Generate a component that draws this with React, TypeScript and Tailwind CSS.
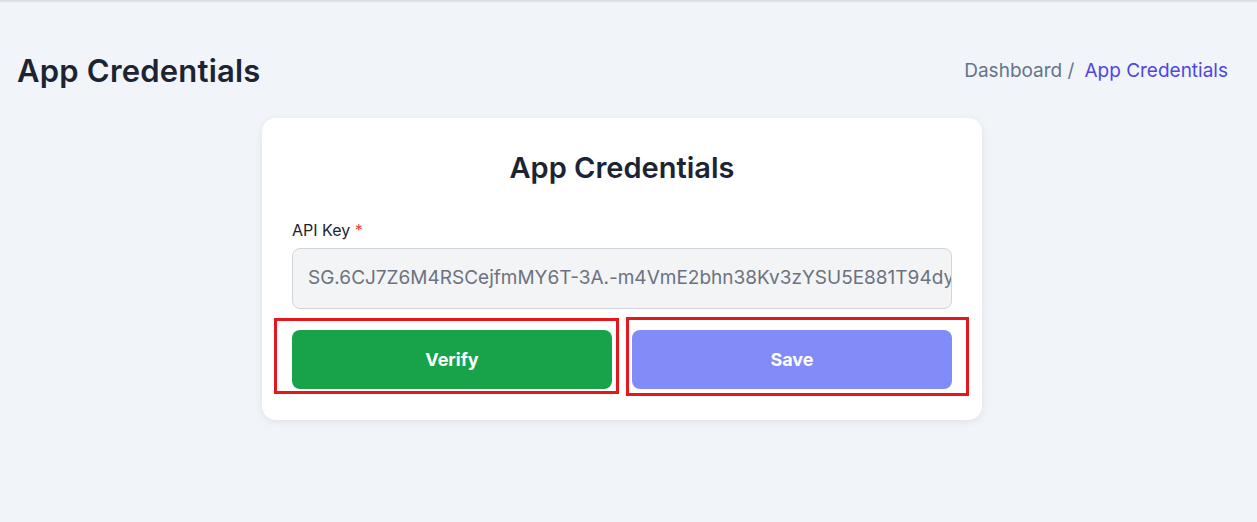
import React from "react";

const font = { fontFamily: "Inter, 'Noto Sans', sans-serif" };

export default function App() {
  return (
    <div className="min-h-[522px] w-full bg-[#f1f4f9] text-[#1c2434] relative" style={font}>
      {/* top bar shadow */}
      <div className="h-[3px] w-full bg-gradient-to-b from-[#d5d9e0] to-[#f1f4f9]" />

      {/* Page header */}
      <div className="flex items-center justify-between pl-[17px] pr-[29px] pt-[45px]">
        <h1 className="text-[31px] font-semibold tracking-[0.2px]">App Credentials</h1>
        <nav className="flex items-center gap-[10px] text-[19px]">
          <span className="text-[#64748b]">Dashboard /</span>
          <span className="text-[#4f46e5]">App Credentials</span>
        </nav>
      </div>

      {/* Card */}
      <div className="flex justify-center pr-[13px] mt-[23px]">
        <div className="w-[720px] bg-white rounded-[14px] shadow-[0_2px_8px_rgba(0,0,0,0.08)] px-[30px] pt-[32px] pb-[31px]">
          <h2 className="text-center text-[29px] font-semibold leading-[36px]">App Credentials</h2>

          <label className="block mt-[32px] text-[16px] text-[#1c2434]">
            API Key <span className="text-[#ef4444]">*</span>
          </label>
          {/* key is longer than the field, so it is cut at the right edge as in the original */}
          <div className="mt-[6px] h-[61px] rounded-[8px] border border-[#d1d5db] bg-[#f3f4f6] pl-[15px] pr-[16px] flex items-center overflow-hidden">
            <span className="text-[19px] text-[#6b7280] whitespace-nowrap">
              SG.6CJ7Z6M4RSCejfmMY6T-3A.-m4VmE2bhn38Kv3zYSU5E881T94dy
            </span>
          </div>

          <div className="mt-[21px] grid grid-cols-2 gap-[20px]">
            <div className="relative">
              <button className="w-full h-[59px] rounded-[8px] bg-[#18a34a] text-white text-[18px] font-bold">
                Verify
              </button>
              <div className="absolute left-[-18px] right-[-7px] top-[-12px] bottom-[-5px] border-[3px] border-[#e5161c] pointer-events-none" />
            </div>
            <div className="relative">
              <button className="w-full h-[59px] rounded-[8px] bg-[#818cf8] text-white text-[18px] font-bold">
                Save
              </button>
              <div className="absolute left-[-6px] right-[-17px] top-[-13px] bottom-[-7px] border-[3px] border-[#e5161c] pointer-events-none" />
            </div>
          </div>
        </div>
      </div>
    </div>
  );
}
